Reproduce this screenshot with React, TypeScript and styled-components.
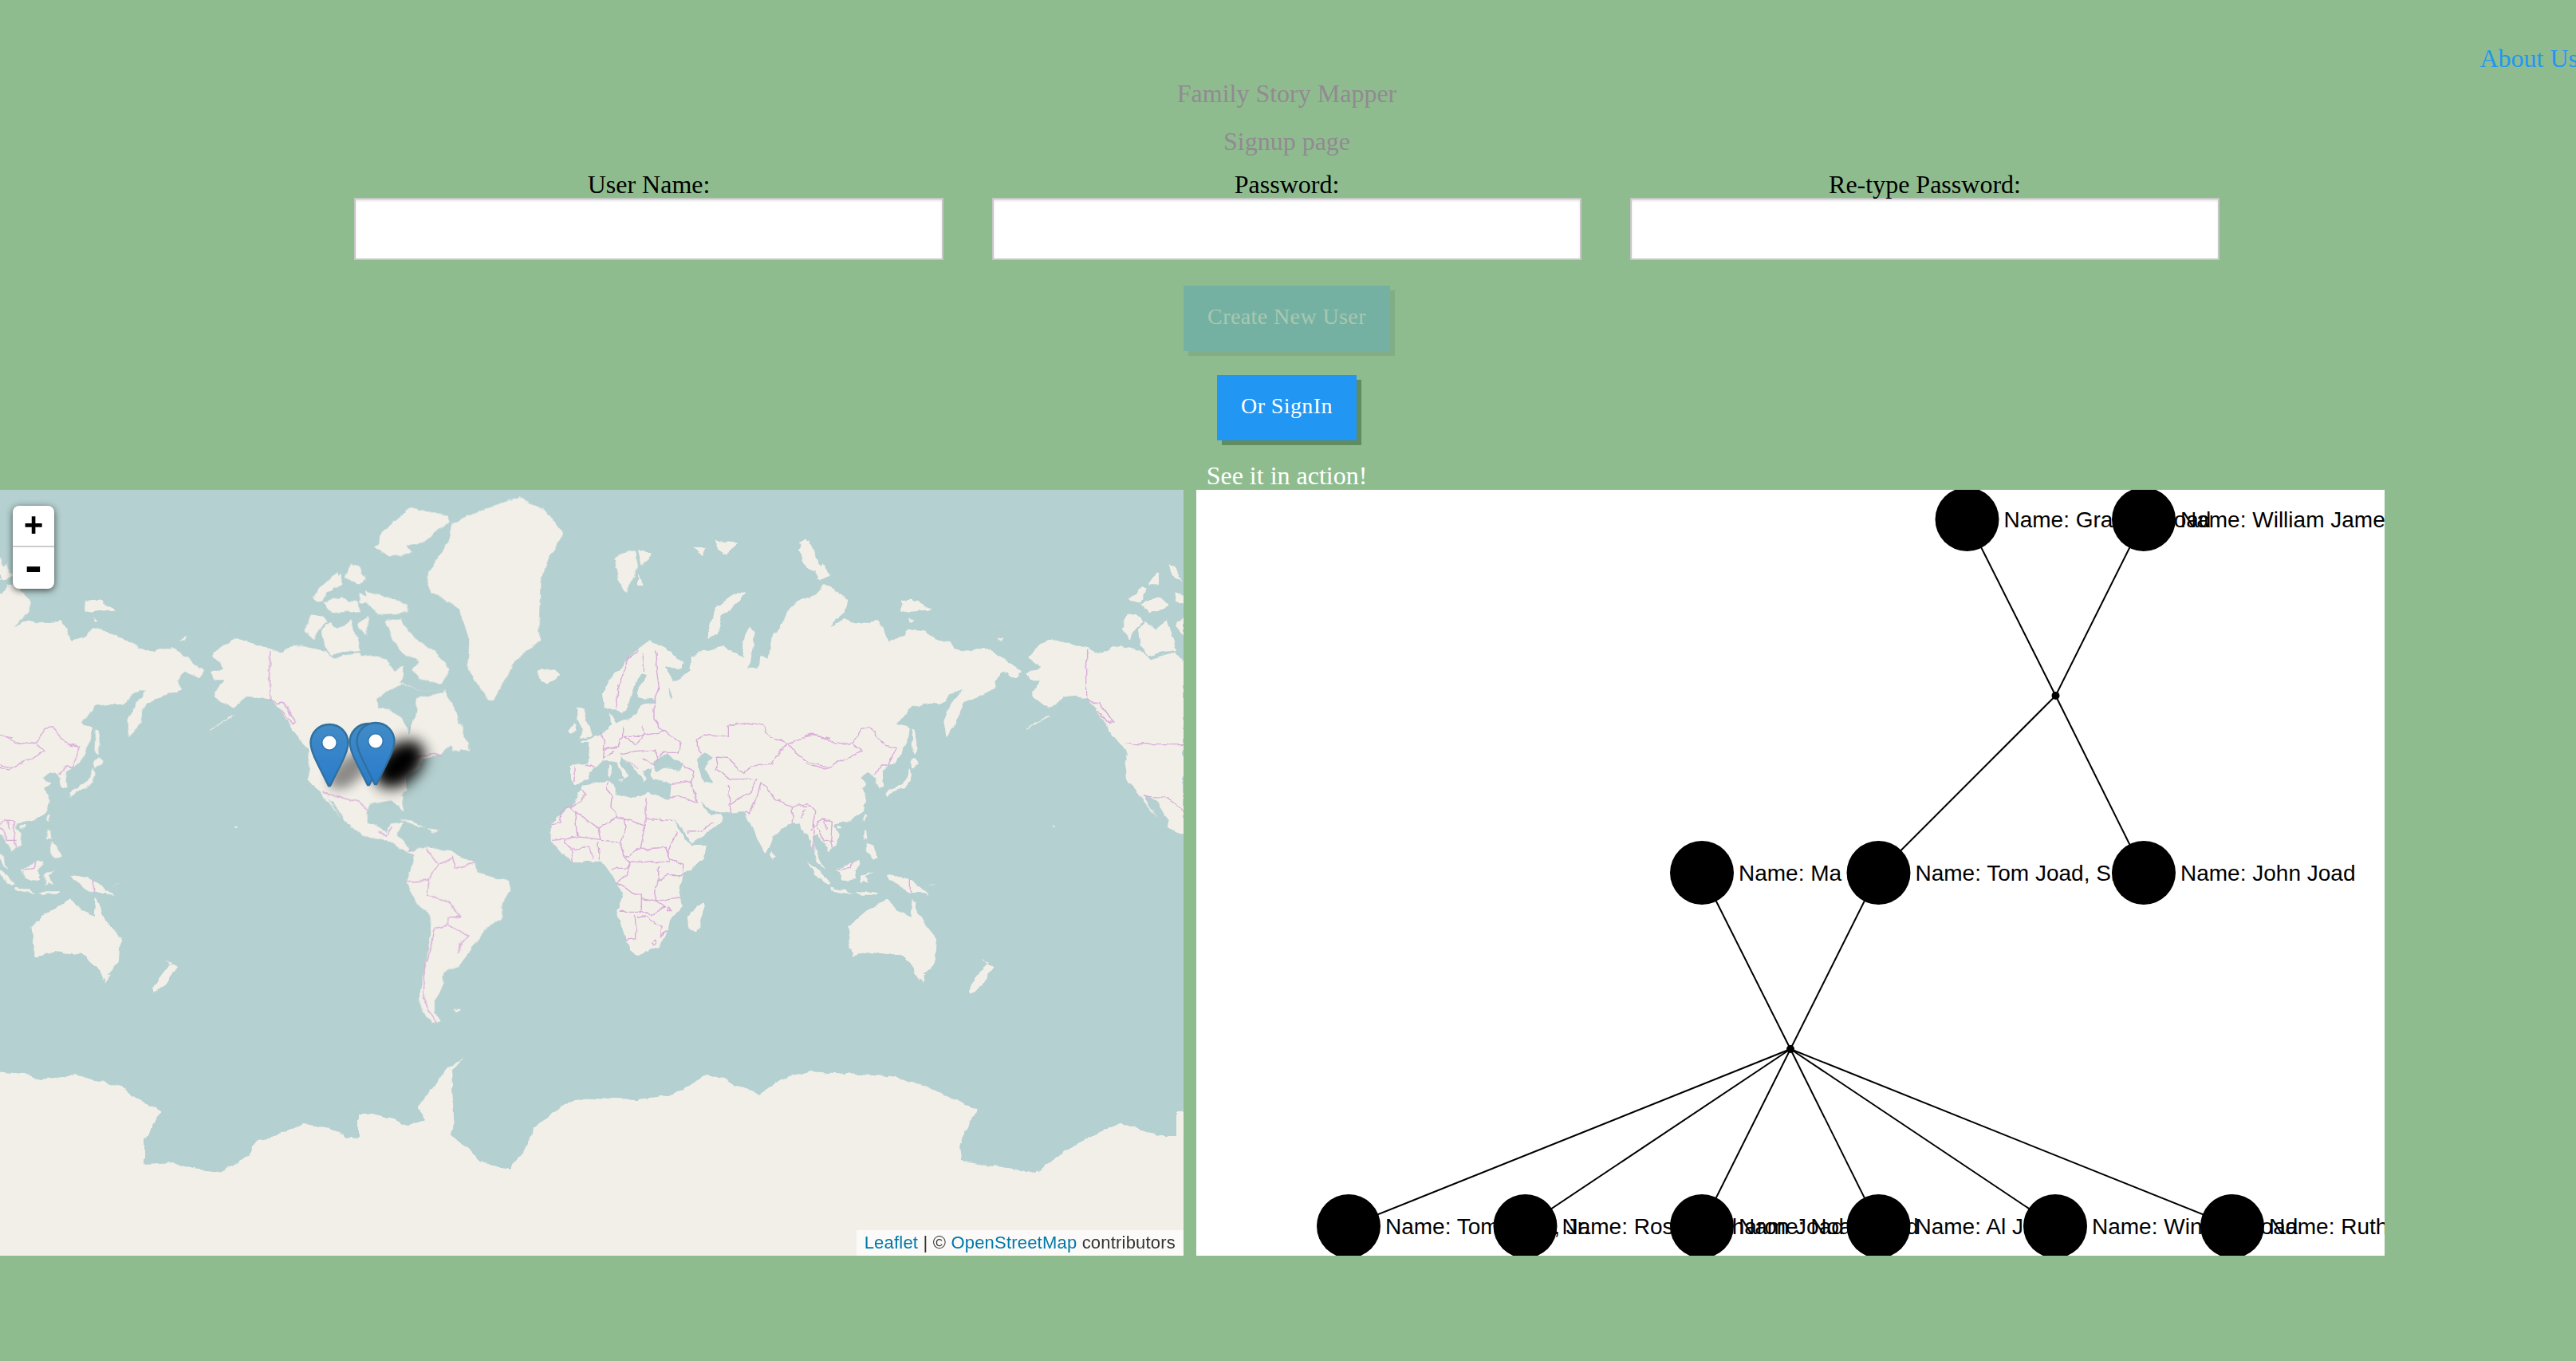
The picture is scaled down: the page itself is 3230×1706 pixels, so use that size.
import React from "react";
import styled, { createGlobalStyle } from "styled-components";

const GlobalStyle = createGlobalStyle`
  html, body {
    margin: 0;
    padding: 0;
    background: #8fbc8f;
    overflow: hidden;
    font-family: "Liberation Serif", "Times New Roman", serif;
  }
`;

const Page = styled.div`
  width: 3230px;
  height: 1706px;
  padding-top: 55px;
  box-sizing: border-box;
  text-align: center;
`;

const Centered = styled.div`
  width: 3227px;
`;

const TopBar = styled.div`
  display: flex;
  justify-content: flex-end;
  margin-right: -3px;
  height: 36px;
`;

const AboutLink = styled.a`
  font-size: 32px;
  line-height: 36px;
  color: #2196f3;
  white-space: nowrap;
`;

const Title = styled.div<{ $gap: number }>`
  margin-top: ${(p) => p.$gap}px;
  font-size: 32px;
  line-height: 36px;
  color: #918a91;
`;

const SignupForm = styled.form`
  display: grid;
  grid-template-columns: repeat(3, 739px);
  justify-content: center;
  column-gap: 61px;
  margin-top: 18px;
`;

const Field = styled.label`
  display: block;
  font-size: 32px;
  line-height: 36px;
  color: #000;
`;

const TextInput = styled.input`
  display: block;
  width: 739px;
  height: 78px;
  margin-top: -1px;
  box-sizing: border-box;
  border: 2px solid #c6c6c6;
  box-shadow: inset 0 2px 3px rgba(0, 0, 0, 0.1);
  background: #fff;
  outline: none;
`;

const ActionButton = styled.button<{ $disabled?: boolean; $gap: number }>`
  display: block;
  margin: ${(p) => p.$gap}px auto 0;
  height: 82px;
  padding: 0 30px 4px;
  border: 0;
  font-family: inherit;
  font-size: 28px;
  letter-spacing: 0.4px;
  color: ${(p) => (p.$disabled ? "#a9c8b0" : "#fff")};
  background: ${(p) => (p.$disabled ? "#74b1a3" : "#2196f3")};
  box-shadow: 6px 6px 0 ${(p) => (p.$disabled ? "#82ad85" : "#608c60")};
`;

const ActionHint = styled.div`
  margin-top: 27px;
  font-size: 32px;
  line-height: 35px;
  color: #fff;
`;

const DemoRow = styled.div`
  display: flex;
  gap: 16px;
  height: 960px;
`;

const MapPanel = styled.div`
  position: relative;
  flex: 0 0 1484px;
  height: 960px;
  overflow: hidden;
  background: #b5d0d0;
`;

const MapCanvas = styled.svg`
  display: block;
  width: 1484px;
  height: 960px;
  filter: blur(0.6px);
`;

const ZoomControl = styled.div`
  position: absolute;
  left: 16px;
  top: 20px;
  width: 52px;
  height: 104px;
  border-radius: 8px;
  background: #fff;
  box-shadow: 0 2px 8px rgba(0, 0, 0, 0.65);
  overflow: hidden;
`;

const ZoomButton = styled.div<{ $divider?: boolean; $size: number }>`
  display: flex;
  align-items: center;
  justify-content: center;
  height: 52px;
  padding-top: 4px;
  box-sizing: border-box;
  font-family: "Liberation Mono", monospace;
  font-weight: 700;
  font-size: ${(p) => p.$size}px;
  line-height: 40px;
  color: #000;
  border-bottom: ${(p) => (p.$divider ? "2px solid #ccc" : "0")};
`;

const PinShadow = styled.svg<{ $x: number; $y: number; $dark?: boolean }>`
  position: absolute;
  left: ${(p) => p.$x}px;
  top: ${(p) => p.$y}px;
  width: 130px;
  height: 120px;
  opacity: ${(p) => (p.$dark ? 1 : 0.42)};
`;

const Pin = styled.svg<{ $x: number; $y: number }>`
  position: absolute;
  left: ${(p) => p.$x}px;
  top: ${(p) => p.$y}px;
  width: 50px;
  height: 82px;
`;

const Attribution = styled.div`
  position: absolute;
  right: 0;
  bottom: 0;
  height: 32px;
  padding: 0 10px;
  font-family: "Liberation Sans", Arial, sans-serif;
  font-size: 22px;
  letter-spacing: 0.2px;
  line-height: 32px;
  color: #333;
  background: rgba(255, 255, 255, 0.7);
  white-space: nowrap;
`;

const AttributionLink = styled.a`
  color: #0078a8;
`;

const GraphPanel = styled.svg`
  display: block;
  flex: 0 0 1490px;
  width: 1490px;
  height: 960px;
  background: #fff;
`;

const NodeLabel = styled.text`
  font-family: "Liberation Sans", Arial, sans-serif;
  font-size: 28px;
  fill: #000;
`;

type MapLayer = {
  transform: string;
  land: string[];
  water?: string[];
  islands?: string[];
  borders?: string[];
  copies: number[];
};

const FAR_EAST: MapLayer = {
  transform: "translate(1000 26) scale(.33333)",
  copies: [0, -1024],
  land: [
    "-10,345 40,325 75,310 100,280 125,285 160,310 190,340 180,375 150,410 120,440 175,410 240,425 275,425 300,410 320,440 340,490 400,470 420,445 470,450 500,470 540,490 580,500 590,520 650,530 670,520 720,520 780,560 810,585 840,600 825,630 790,615 765,605 745,640 750,670 680,700 625,720 610,750 600,800 560,850 550,790 580,730 620,675 575,690 535,730 510,725 430,735 380,800 420,815 410,880 370,950 340,960 320,985 325,1040 305,1048 298,1010 285,990 265,985 230,1005 260,1030 240,1045 262,1090 245,1140 200,1165 140,1180 135,1190 155,1215 150,1255 115,1285 100,1250 80,1220 60,1225 65,1280 85,1310 105,1350 75,1320 55,1270 40,1220 20,1200 10,1175 -10,1170",
    "1452,565 1420,530 1390,540 1330,560 1300,530 1260,520 1210,510 1150,530 1130,535 1090,520 1040,505 960,480 905,510 870,545 915,590 860,610 880,640 915,640 880,680 880,700 920,725 950,740 985,715 1000,700 1030,700 1090,710 1120,740 1160,800 1170,830 1210,870 1240,900 1230,960 1240,1010 1270,1050 1300,1090 1330,1130 1355,1160 1320,1110 1300,1065 1350,1090 1395,1170 1392,1190 1452,1220",
    "430,820 440,825 448,880 440,915 430,905 432,860",
    "425,945 440,930 460,950 430,965",
    "420,965 430,985 425,1020 400,1045 360,1050 335,1080 328,1065 345,1045 390,1030 410,1010",
    "255,1140 260,1145 252,1168 246,1160",
    "150,1185 165,1190 155,1200 148,1195",
    "250,1200 262,1205 265,1240 250,1240",
    "260,1250 290,1260 298,1305 280,1310 262,1285",
    "150,1350 210,1320 232,1310 235,1330 215,1350 220,1385 190,1395 165,1385",
    "30,1315 60,1340 100,1375 125,1405 115,1410 70,1370",
    "125,1415 170,1425 210,1440 170,1435 125,1425",
    "240,1370 280,1355 255,1375 270,1405 250,1395 240,1410",
    "220,1435 300,1435 290,1445 240,1445",
    "335,1370 370,1375 420,1385 465,1420 500,1450 470,1440 425,1440 390,1420 370,1400 345,1390",
    "510,1405 525,1400 490,1415",
    "5,150 30,105 50,130 45,165 70,195 60,225 35,215 20,185",
    "70,260 95,200 120,240 100,250",
    "390,340 430,335 455,360 420,380 395,375",
    "465,358 505,372 490,378",
    "420,405 440,420 425,425",
    "745,485 775,478 770,488",
    "960,1185 970,1192 962,1195",
    "1220,450 1240,390 1290,400 1300,420 1270,450 1250,485",
    "1280,450 1310,420 1345,445 1390,415 1420,500 1425,525 1380,530 1320,545 1290,510",
    "1245,330 1300,285 1310,300 1290,345 1260,340",
    "1290,350 1360,320 1390,350 1370,375 1320,385",
    "1330,260 1360,235 1355,280 1320,280",
    "1390,205 1420,210 1450,265 1420,250",
    "1420,310 1452,320 1452,350 1425,345",
    "1420,430 1452,400 1452,470",
    "860,822 905,795 945,770 950,772 908,798 862,824",
  ],
  borders: [
    "0,860 60,840 110,860 150,880 210,870 240,820 270,815 300,850 330,880 370,890 340,960 320,960 290,990",
    "0,930 50,960 110,970 170,940 240,905 210,880",
    "0,1110 40,1100 65,1130 60,1190 50,1200 90,1160 130,1170 125,1240 130,1270",
    "60,1200 60,1280",
    "75,1190 100,1240 135,1240",
    "100,1160 110,1200",
    "155,1350 200,1345 210,1320",
    "424,1385 424,1440",
    "1088,525 1088,710 1115,725 1135,720 1185,795 1170,800 1130,750",
    "1240,878 1452,878",
    "1295,1065 1320,1075 1380,1078 1410,1095 1450,1130",
  ],
};

const NORTH_AMERICA: MapLayer = {
  transform: "translate(0 -14) scale(.5102 .33333)",
  copies: [0],
  land: [
    "700,640 740,625 800,685 850,680 900,660 950,680 970,725 995,700 985,770 1040,795 1095,795 1135,930 1155,1025 1105,1000 1080,1040 1040,1055 1030,1080 1000,1120 1000,1175 985,1190 995,1250 985,1240 965,1210 905,1225 905,1250 905,1290 950,1330 960,1300 990,1295 975,1340 1010,1400 1030,1385 1050,1400 1030,1420 990,1400 955,1360 900,1345 850,1290 815,1215 760,1130 760,900 700,800",
  ],
  water: [
    "925,830 955,790 990,775 1040,795 1100,795 1070,810 1025,825 1020,890 1005,960 990,900 960,875 930,860",
  ],
  islands: [
    "940,200 1010,110 1100,140 1105,160 1040,240 1000,250 1010,280 960,290 920,260",
    "765,445 830,350 840,400 800,430",
    "860,320 900,370 880,400 850,370",
    "900,420 1000,470 1005,505 930,510 900,470",
    "820,470 880,460 890,495 820,505",
    "945,530 985,530 1020,600 1070,650 1105,715 1085,770 1040,760 1010,720 1030,690 980,640 960,590",
    "1045,370 1060,340 1100,240 1110,170 1190,115 1280,70 1340,120 1385,210 1345,310 1330,390 1325,610 1265,690 1210,835 1195,820 1150,720 1155,620 1130,490 1060,430",
    "1105,1000 1140,1000 1130,1025 1110,1020",
    "980,1282 1010,1285 1045,1310 1020,1302",
    "1050,1315 1085,1322 1060,1330",
    "1510,300 1560,270 1568,330 1540,430 1520,380",
  ],
  borders: [
    "795,1180 880,1215 905,1250",
    "930,1330 950,1340 965,1310",
    "1000,1060 1060,1035 1085,1045",
    "1000,1400 1020,1395",
  ],
};

const EURAFRICA: MapLayer = {
  transform: "translate(640 146) scale(.33333)",
  copies: [0, -1024],
  land: [
    "270,675 370,655 395,680 395,705 455,720 520,700 590,725 600,750 640,850 680,900 735,900 725,950 650,1010 635,1070 645,1130 600,1180 590,1220 560,1280 470,1315 455,1300 430,1235 400,1150 420,1080 380,1010 345,960 240,960 190,930 155,880 155,810 225,755 270,690",
    "225,600 290,590 295,510 262,510 340,480 378,448 375,400 395,430 445,425 400,385 355,385 345,330 400,240 470,170 530,125 600,170 650,210 640,235 590,230 610,280 680,240 680,190 720,170 800,150 820,165 880,190 870,130 895,75 920,90 915,130 900,230 930,230 945,180 970,200 985,100 1000,100 1055,0 1080,-15 1110,-20 1110,860 1090,800 1060,810 985,870 960,930 920,860 900,810 880,775 785,775 760,770 715,735 750,790 785,780 800,810 680,890 590,750 585,735 600,720 605,670 580,665 530,640 530,610 490,620 510,650 500,660 490,640 440,590 415,565 410,590 445,640 420,660 430,650 395,585 350,580 325,600 300,625 290,650 245,670 225,650",
    "725,1110 730,1140 695,1225 670,1215 680,1150",
    "100,240 170,235 185,260 140,295 105,270",
    "250,380 275,385 290,450 315,480 260,500 270,460 250,420",
    "215,470 245,435 250,465 225,485",
    "405,650 425,650 420,660",
    "372,595 385,600 380,640 370,635",
    "985,920 995,945 985,950 978,935",
  ],
  water: [
    "490,250 510,255 490,300 475,340 540,350 550,360 490,370 480,400 400,440 390,430 430,400 450,350 465,300",
    "535,595 560,560 590,555 610,575 650,590 640,615 590,610 550,620",
    "705,575 730,550 760,570 745,580 730,610 760,660 730,665 715,620",
    "595,310 610,340 600,345",
  ],
  borders: [
    "155,815 185,810 190,770 225,755",
    "270,690 285,710 225,755 245,775 330,835 400,795",
    "245,775 255,870 160,880",
    "370,655 365,690 385,715 380,760 400,795 430,800 510,825 510,720",
    "510,800 610,805",
    "510,825 495,880 490,905",
    "430,800 435,830 415,885 430,945",
    "330,835 340,880 415,885",
    "255,870 300,875 340,880",
    "195,880 230,915 235,960",
    "230,910 300,905 310,950",
    "330,890 335,960",
    "430,945 490,905 510,915 580,910 600,950 650,970 650,1010",
    "625,850 590,920 600,960",
    "430,945 450,965 530,955 600,960",
    "380,985 440,985 450,965 440,1010 400,1045",
    "400,1045 420,1050 455,1075 490,1085 490,1150 410,1150",
    "560,975 555,1030 600,1010 650,1010",
    "555,1030 545,1075 550,1110 590,1100 640,1095",
    "490,1100 550,1110 580,1130 535,1160 490,1150",
    "470,1160 470,1250 435,1255",
    "480,1170 520,1170 550,1195 570,1200 565,1240 590,1220",
    "595,1130 605,1145 590,1145 595,1130",
    "530,1265 545,1255 550,1268 540,1278 530,1265",
    "240,605 240,660",
    "285,595 320,600",
    "345,470 355,510 350,570 390,545",
    "425,450 425,490 410,500 410,530 355,540",
    "500,450 505,490 430,490",
    "540,370 540,420 570,470 505,490",
    "570,470 640,510 630,550 570,550 550,560",
    "400,380 405,300 440,200 480,170",
    "495,180 500,240",
    "545,160 550,240 560,310 540,365",
    "410,560 470,545 545,540 555,590",
    "440,590 480,610",
    "500,570 545,600",
    "430,490 470,520 505,490",
    "650,600 690,620 680,660 605,670",
    "680,660 700,740 630,710 600,720",
    "665,850 720,840 770,810",
    "700,500 730,480 820,490 820,450 890,435 950,445 980,490 1045,515 1000,560 985,595 905,600 880,630 820,575 775,570 780,600 770,610",
    "700,500 700,530 720,555",
    "1045,515 1080,560 1130,590 1200,605",
    "1045,515 1140,485 1200,495",
    "770,610 830,650 880,650 930,650",
    "820,670 825,740 830,775",
    "825,740 900,700 930,650",
    "880,770 895,780 930,720 945,660",
    "945,660 975,700 1000,730 1060,755 1130,750",
    "1060,755 1060,810",
    "1090,800 1110,760",
  ],
};

const OCEANIA: MapLayer = {
  transform: "translate(800 -14) scale(.44643 .63776)",
  copies: [0, -1024],
  land: [
    "590,880 640,850 700,825 730,850 765,860 770,825 800,870 840,905 835,950 790,985 775,960 735,935 650,930 600,940",
    "790,975 810,975 800,990",
    "965,945 1000,960 960,1000 930,1010 930,1000 985,950",
    "195,315 215,255 270,225 305,225 280,240 235,270 225,305",
    "155,135 190,135 180,150",
    "215,120 280,125 250,150 225,140",
    "450,125 480,120 510,170 540,190 510,200 480,160",
    "740,240 780,240 825,255 770,260",
    "0,140 40,150 10,170",
    "0,185 15,210 0,210",
    "140,860 185,835 170,885 145,890",
  ],
};

const SOUTH_AMERICA: MapLayer = {
  transform: "translate(0 436) scale(.5102 .35088)",
  copies: [0],
  land: [
    "1020,50 1050,30 1110,50 1165,90 1170,125 1250,155 1255,185 1235,235 1230,290 1190,330 1175,370 1150,410 1130,460 1090,480 1085,540 1070,580 1070,620 1085,655 1060,665 1035,610 1030,560 1045,470 1055,370 1060,290 1050,265 1025,240 1000,160 1010,110",
    "1110,615 1130,615 1120,625",
  ],
  borders: [
    "1045,30 1075,100 1110,70 1120,110 1165,90",
    "1000,160 1055,150 1050,205 1070,210",
    "1070,210 1105,235 1130,285 1105,290 1100,310 1150,350 1130,385 1125,415",
    "1100,310 1070,320 1045,470 1040,580 1070,660",
    "1075,100 1060,130 1055,150",
  ],
};

const ANTARCTICA =
  "-20,1342 31,1346 51,1353 97,1348 128,1355 153,1364 179,1382 202,1392 181,1429 181,1459 219,1457 240,1465 276,1469 311,1450 321,1431 362,1418 380,1408 423,1417 434,1427 449,1425 449,1396 467,1396 497,1404 510,1411 533,1404 525,1387 541,1366 561,1338 582,1327 566,1341 569,1401 564,1422 587,1439 602,1457 638,1464 663,1436 668,1415 686,1401 709,1383 740,1376 800,1378 845,1372 889,1346 952,1372 979,1353 1014,1343 1112,1349 1157,1359 1224,1391 1204,1435 1206,1455 1246,1461 1298,1470 1336,1442 1403,1407 1452,1423 1474,1423 1474,1394 1510,1393 1510,1620 -20,1620";

const MAP_LAYERS = [FAR_EAST, EURAFRICA, NORTH_AMERICA, OCEANIA, SOUTH_AMERICA];

function MapLayerGroup({ layer }: { layer: MapLayer }) {
  return (
    <>
      {layer.copies.map((offset) => (
        <g key={offset} transform={`translate(${offset} 0)`}>
          <g transform={layer.transform}>
            {layer.land.map((points) => (
              <polygon key={points} points={points} fill="#f2efe9" />
            ))}
            {layer.water?.map((points) => (
              <polygon key={points} points={points} fill="#b5d0d0" />
            ))}
            {layer.islands?.map((points) => (
              <polygon key={points} points={points} fill="#f2efe9" />
            ))}
            {layer.borders?.map((points) => (
              <polyline
                key={points}
                points={points}
                fill="none"
                stroke="#d9abd9"
                strokeWidth="1.4"
                vectorEffect="non-scaling-stroke"
              />
            ))}
          </g>
        </g>
      ))}
    </>
  );
}

function MarkerShadow({ x, y, dark }: { x: number; y: number; dark?: boolean }) {
  return (
    <PinShadow $x={x} $y={y} $dark={dark} viewBox="0 0 130 120">
      <defs>
        <filter
          id={`shadow-${x}`}
          filterUnits="userSpaceOnUse"
          x="0"
          y="0"
          width="130"
          height="120"
        >
          <feGaussianBlur stdDeviation={dark ? 9 : 7} />
        </filter>
      </defs>
      <ellipse
        cx="55"
        cy="60"
        rx={dark ? 36 : 30}
        ry={dark ? 24 : 16}
        transform="rotate(-42 55 60)"
        fill="#000"
        filter={`url(#shadow-${x})`}
      />
    </PinShadow>
  );
}

function Marker({ x, y }: { x: number; y: number }) {
  return (
    <Pin $x={x} $y={y} viewBox="0 0 50 82">
      <defs>
        <linearGradient id={`pin-${x}`} x1="0" y1="0" x2="0" y2="1">
          <stop offset="0" stopColor="#418bc7" />
          <stop offset="1" stopColor="#2a7ccb" />
        </linearGradient>
      </defs>
      <path
        d="M25 2C11.5 2 1.5 12.5 1.5 25.5C1.5 33 5 41 10 51L24 79H26L40 51C45 41 48.5 33 48.5 25.5C48.5 12.5 38.5 2 25 2Z"
        fill={`url(#pin-${x})`}
        stroke="#30709f"
        strokeWidth="2.4"
      />
      <circle cx="25" cy="25" r="10" fill="#2c6a99" opacity="0.55" />
      <circle cx="25" cy="25" r="8.5" fill="#fff" />
    </Pin>
  );
}

type TreeNode = { x: number; y: number; name: string };

const PEOPLE: TreeNode[] = [
  { x: 966.5, y: 37, name: "Grampa Joad" },
  { x: 1188, y: 37, name: "William James Joad" },
  { x: 634, y: 480, name: "Ma Joad" },
  { x: 855.5, y: 480, name: "Tom Joad, Sr." },
  { x: 1188, y: 480, name: "John Joad" },
  { x: 191, y: 923, name: "Tom Joad, Jr." },
  { x: 412.5, y: 923, name: "Rose of Sharon Joad" },
  { x: 634, y: 923, name: "Noah Joad" },
  { x: 855.5, y: 923, name: "Al Joad" },
  { x: 1077, y: 923, name: "Winfield Joad" },
  { x: 1299, y: 923, name: "Ruthie Joad" },
];

const UNIONS = [
  { x: 1077.5, y: 258, members: [0, 1, 3, 4] },
  { x: 745, y: 701, members: [2, 3, 5, 6, 7, 8, 9, 10] },
];

function FamilyTree() {
  return (
    <GraphPanel viewBox="0 0 1490 960">
      {UNIONS.map((union) =>
        union.members.map((member) => (
          <line
            key={`${union.x}-${member}`}
            x1={union.x}
            y1={union.y}
            x2={PEOPLE[member].x}
            y2={PEOPLE[member].y}
            stroke="#000"
            strokeWidth="2"
          />
        ))
      )}
      {UNIONS.map((union) => (
        <circle key={union.x} cx={union.x} cy={union.y} r="5" fill="#000" />
      ))}
      {PEOPLE.map((person) => (
        <g key={person.name}>
          <circle cx={person.x} cy={person.y} r="40" fill="#000" />
          <NodeLabel x={person.x + 46} y={person.y + 10}>
            Name: {person.name}
          </NodeLabel>
        </g>
      ))}
    </GraphPanel>
  );
}

export default function App() {
  return (
    <Page>
      <GlobalStyle />
      <TopBar>
        <AboutLink>About Us</AboutLink>
      </TopBar>
      <Centered>
        <Title $gap={8}>Family Story Mapper</Title>
        <Title $gap={24}>Signup page</Title>
        <SignupForm>
          <Field>
            User Name:
            <TextInput type="text" />
          </Field>
          <Field>
            Password:
            <TextInput type="password" />
          </Field>
          <Field>
            Re-type Password:
            <TextInput type="password" />
          </Field>
        </SignupForm>
        <ActionButton type="button" $disabled $gap={32}>
          Create New User
        </ActionButton>
        <ActionButton type="button" $gap={30}>
          Or SignIn
        </ActionButton>
        <ActionHint>See it in action!</ActionHint>
      </Centered>
      <DemoRow>
        <MapPanel>
          <MapCanvas viewBox="0 0 1484 960">
            <defs>
              <filter
                id="coastline"
                filterUnits="userSpaceOnUse"
                x="-60"
                y="-60"
                width="1620"
                height="1100"
                colorInterpolationFilters="sRGB"
              >
                <feTurbulence type="fractalNoise" baseFrequency="0.07" numOctaves="3" seed="4" />
                <feDisplacementMap in="SourceGraphic" scale="7" xChannelSelector="R" yChannelSelector="G" />
              </filter>
            </defs>
            <rect width="1484" height="960" fill="#b5d0d0" />
            <g filter="url(#coastline)">
              {MAP_LAYERS.map((layer) => (
                <MapLayerGroup key={layer.transform} layer={layer} />
              ))}
              <polygon points={ANTARCTICA} transform="translate(0 -614)" fill="#f2efe9" />
            </g>
          </MapCanvas>
          <ZoomControl>
            <ZoomButton $divider $size={42}>+</ZoomButton>
            <ZoomButton $size={58}>-</ZoomButton>
          </ZoomControl>
          <MarkerShadow x={382} y={292} />
          <MarkerShadow x={446} y={284} dark />
          <Marker x={388} y={292} />
          <Marker x={437} y={291} />
          <Marker x={446} y={290} />
          <Attribution>
            <AttributionLink>Leaflet</AttributionLink> | © <AttributionLink>OpenStreetMap</AttributionLink> contributors
          </Attribution>
        </MapPanel>
        <FamilyTree />
      </DemoRow>
    </Page>
  );
}
